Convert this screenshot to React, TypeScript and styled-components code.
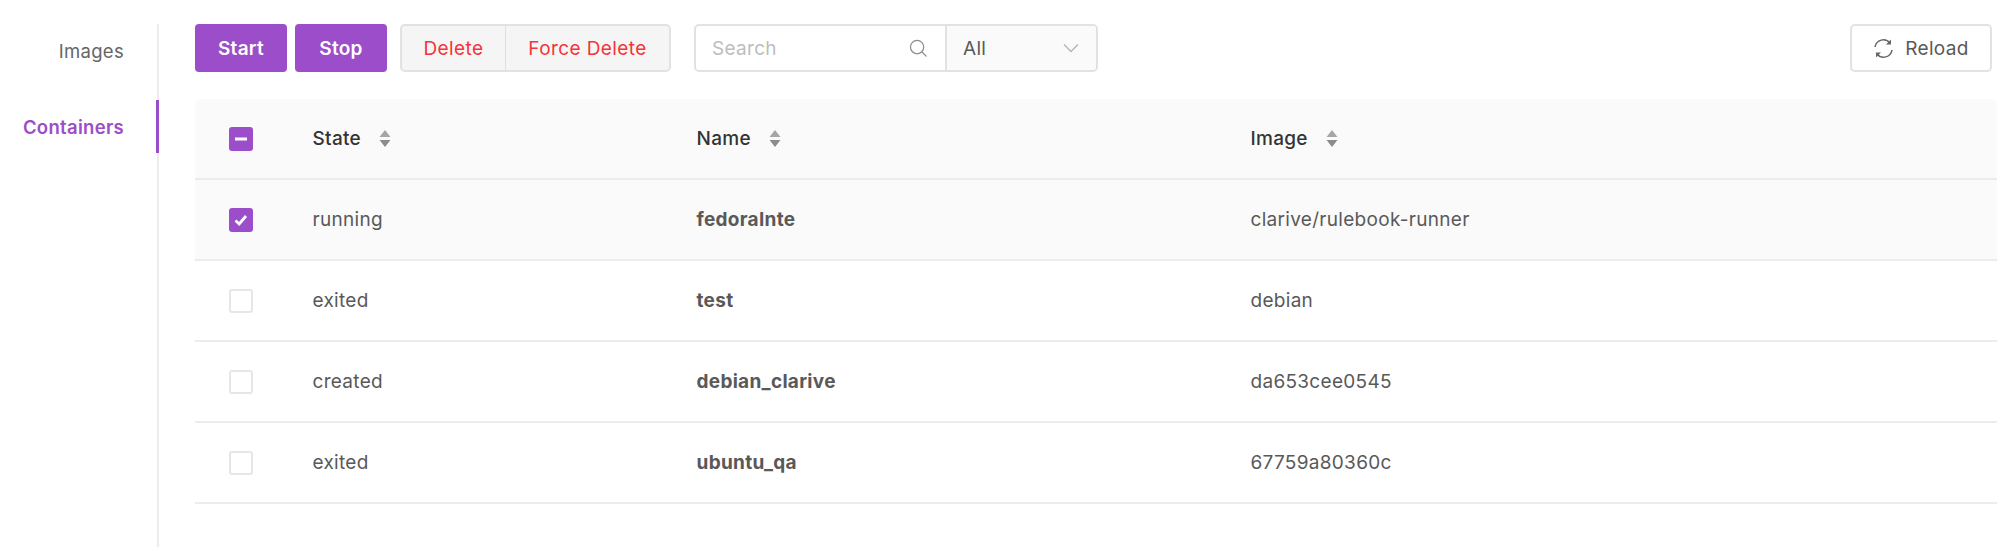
import React from "react";
import styled, { createGlobalStyle } from "styled-components";

const Global = createGlobalStyle`
  html, body { margin: 0; padding: 0; background: #fff; }
  body { font-family: Inter, "Open Sans", "Liberation Sans", sans-serif; font-size: 19px; letter-spacing: 0.3px; color: #595959; overflow: hidden; }
  * { box-sizing: border-box; }
`;

const PURPLE = "#9c4dc9";

const Page = styled.div`
  display: flex;
  width: 2000px;
  height: 547px;
  padding-top: 24px;
`;

const Sidebar = styled.nav`
  width: 159px;
  flex: none;
  border-right: 2px solid #ececec;
`;

const NavItem = styled.div<{ $active?: boolean }>`
  position: relative;
  height: 53px;
  margin-bottom: 23px;
  padding-right: 33px;
  display: flex;
  align-items: center;
  justify-content: flex-end;
  font-size: 18.5px;
  color: ${(p) => (p.$active ? PURPLE : "#666")};
  font-weight: ${(p) => (p.$active ? 600 : 400)};
  &::after {
    content: "";
    position: absolute;
    display: ${(p) => (p.$active ? "block" : "none")};
    top: 0;
    bottom: 0;
    right: -2px;
    width: 3px;
    background: ${PURPLE};
  }
`;

const Main = styled.main`
  flex: 1;
  min-width: 0;
  padding-left: 36px;
  padding-right: 3px;
`;

const Toolbar = styled.div`
  display: flex;
  align-items: center;
  height: 48px;
  padding-right: 5px;
`;

const PrimaryButton = styled.button<{ $w: number }>`
  height: 48px;
  width: ${(p) => p.$w}px;
  margin-right: 8px;
  border: 0;
  border-radius: 4px;
  background: ${PURPLE};
  color: #fff;
  font: 600 19px Inter, sans-serif;
  letter-spacing: 0.3px;
  padding: 0;
`;

const ButtonGroup = styled.div`
  display: flex;
  height: 48px;
  margin-left: 5px;
  border: 2px solid #e2e2e2;
  border-radius: 5px;
  background: #f5f5f5;
  overflow: hidden;
`;

const DangerButton = styled.button<{ $w: number }>`
  width: ${(p) => p.$w}px;
  border: 0;
  border-left: 1px solid #dedede;
  background: transparent;
  color: #f5333a;
  font: 400 19px Inter, sans-serif;
  letter-spacing: 0.4px;
  padding: 0;
  &:first-child { border-left: 0; }
`;

const SearchGroup = styled.div`
  display: flex;
  width: 404px;
  height: 48px;
  margin-left: 23px;
  border: 2px solid #e2e2e2;
  border-radius: 5px;
  overflow: hidden;
`;

const SearchField = styled.div`
  width: 251px;
  flex: none;
  display: flex;
  align-items: center;
  justify-content: space-between;
  padding: 0 18px 0 16px;
  border-right: 2px solid #e2e2e2;
  color: #bdbdbd;
`;

const SelectField = styled.div`
  flex: 1;
  display: flex;
  align-items: center;
  justify-content: space-between;
  padding: 0 17px 0 16px;
  background: #fafafa;
  color: #595959;
`;

const Spacer = styled.div`
  flex: 1;
`;

const ReloadButton = styled.button`
  width: 142px;
  height: 48px;
  display: flex;
  align-items: center;
  justify-content: center;
  gap: 11px;
  border: 2px solid #e2e2e2;
  border-radius: 5px;
  background: #fff;
  color: #595959;
  font: 400 19px Inter, sans-serif;
  letter-spacing: 0.3px;
  padding: 0;
`;

const Table = styled.div`
  margin-top: 27px;
`;

const Row = styled.div<{ $tint?: boolean; $head?: boolean }>`
  display: grid;
  grid-template-columns: 117.5px 384px 554px 1fr;
  align-items: center;
  height: 81px;
  border-bottom: 2px solid #ececec;
  background: ${(p) => (p.$tint ? "#fafafa" : "#fff")};
  border-radius: ${(p) => (p.$head ? "6px 6px 0 0" : "0")};
`;

const CheckCell = styled.div`
  padding-left: 34px;
  display: flex;
  align-items: center;
`;

const Box = styled.span<{ $on?: boolean }>`
  width: 24px;
  height: 24px;
  display: flex;
  align-items: center;
  justify-content: center;
  border-radius: 3px;
  background: ${(p) => (p.$on ? PURPLE : "#fff")};
  border: ${(p) => (p.$on ? "0" : "2px solid #e6e6e6")};
`;

const HeadCell = styled.div`
  display: flex;
  align-items: center;
  gap: 18px;
  color: #333;
  font-weight: 500;
`;

const Cell = styled.div<{ $bold?: boolean }>`
  color: #595959;
  font-weight: ${(p) => (p.$bold ? 700 : 400)};
`;

const Sort = () => (
  <svg width="12" height="19" viewBox="0 0 12 19" aria-hidden>
    <path d="M6 1 L11.5 8 H0.5 Z" fill="#a6a6a6" />
    <path d="M6 18 L11.5 11 H0.5 Z" fill="#8c8c8c" />
  </svg>
);

const rows = [
  { state: "running", name: "fedoraInte", image: "clarive/rulebook-runner", on: true },
  { state: "exited", name: "test", image: "debian" },
  { state: "created", name: "debian_clarive", image: "da653cee0545" },
  { state: "exited", name: "ubuntu_qa", image: "67759a80360c" },
];

export default function App() {
  return (
    <>
      <Global />
      <Page>
        <Sidebar>
          <NavItem>Images</NavItem>
          <NavItem $active>Containers</NavItem>
        </Sidebar>
        <Main>
          <Toolbar>
            <PrimaryButton $w={92}>Start</PrimaryButton>
            <PrimaryButton $w={92}>Stop</PrimaryButton>
            <ButtonGroup>
              <DangerButton $w={103}>Delete</DangerButton>
              <DangerButton $w={164}>Force Delete</DangerButton>
            </ButtonGroup>
            <SearchGroup>
              <SearchField>
                Search
                <svg width="18" height="18" viewBox="0 0 20 20" fill="none" stroke="#8c8c8c" strokeWidth="1.4" aria-hidden>
                  <circle cx="9" cy="9" r="7.4" />
                  <path d="M14.5 14.5 L19 19" strokeLinecap="round" />
                </svg>
              </SearchField>
              <SelectField>
                All
                <svg width="16" height="10" viewBox="0 0 16 10" fill="none" stroke="#b5b5b5" strokeWidth="1.4" aria-hidden>
                  <path d="M1 1.5 L8 8.5 L15 1.5" />
                </svg>
              </SelectField>
            </SearchGroup>
            <Spacer />
            <ReloadButton>
              <svg width="21" height="21" viewBox="0 0 21 21" fill="none" stroke="#666" strokeWidth="1.5" aria-hidden>
                <path d="M2 9 A8.5 8.5 0 0 1 17 5" />
                <path d="M19 12 A8.5 8.5 0 0 1 4 16" />
                <path d="M18 1.5 V6.5 H13" fill="#666" stroke="none" />
                <path d="M3 19.5 V14.5 H8" fill="#666" stroke="none" />
              </svg>
              Reload
            </ReloadButton>
          </Toolbar>
          <Table>
            <Row $head $tint>
              <CheckCell>
                <Box $on>
                  <svg width="14" height="14" viewBox="0 0 14 14" aria-hidden>
                    <rect x="1" y="5.5" width="12" height="3" fill="#fff" />
                  </svg>
                </Box>
              </CheckCell>
              <HeadCell>State <Sort /></HeadCell>
              <HeadCell>Name <Sort /></HeadCell>
              <HeadCell>Image <Sort /></HeadCell>
            </Row>
            {rows.map((r) => (
              <Row key={r.name} $tint={r.on}>
                <CheckCell>
                  <Box $on={r.on}>
                    {r.on && (
                      <svg width="16" height="16" viewBox="0 0 16 16" fill="none" stroke="#fff" strokeWidth="2.8" aria-hidden>
                        <path d="M2.5 8.5 L6.2 12 L13 4" />
                      </svg>
                    )}
                  </Box>
                </CheckCell>
                <Cell>{r.state}</Cell>
                <Cell $bold>{r.name}</Cell>
                <Cell>{r.image}</Cell>
              </Row>
            ))}
          </Table>
        </Main>
      </Page>
    </>
  );
}
